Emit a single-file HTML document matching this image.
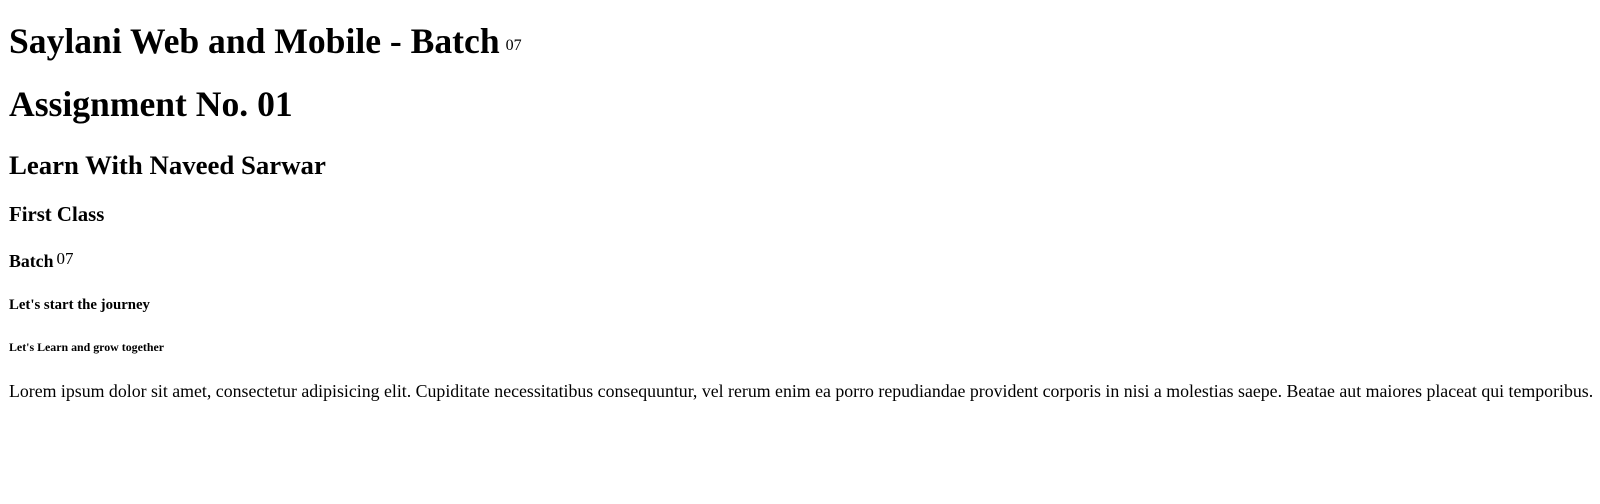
<!DOCTYPE html>
<html><head><meta charset="utf-8"><style>
html,body{margin:0;padding:0;background:#fff;width:1600px;height:504px;overflow:hidden}
body{font-family:"Liberation Serif",serif;color:#000;position:relative}
.l{position:absolute;left:9px;line-height:1;white-space:nowrap;margin:0}
.s{font-weight:normal;position:relative}
</style></head><body>
<div class="l" style="top:24px;font-size:35.6px;font-weight:bold">Saylani Web and Mobile - Batch<span class="s" style="font-size:16px;top:-3px;margin-left:6px">07</span></div>
<div class="l" style="top:87px;font-size:35.6px;font-weight:bold">Assignment No. 01</div>
<div class="l" style="top:152px;font-size:26.8px;font-weight:bold">Learn With Naveed Sarwar</div>
<div class="l" style="top:205px;font-size:20.8px;font-weight:bold">First Class</div>
<div class="l" style="top:253px;font-size:17.8px;font-weight:bold">Batch<span class="s" style="font-size:17px;top:-3px;margin-left:3px">07</span></div>
<div class="l" style="top:298px;font-size:14.8px;font-weight:bold">Let's start the journey</div>
<div class="l" style="top:342px;font-size:11.9px;font-weight:bold">Let's Learn and grow together</div>
<div class="l" style="top:383px;font-size:17.82px">Lorem ipsum dolor sit amet, consectetur adipisicing elit. Cupiditate necessitatibus consequuntur, vel rerum enim ea porro repudiandae provident corporis in nisi a molestias saepe. Beatae aut maiores placeat qui temporibus.</div>
</body></html>
